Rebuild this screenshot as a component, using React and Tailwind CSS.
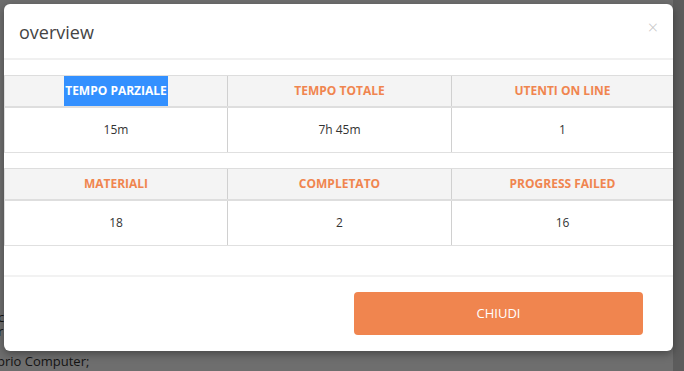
export default function App() {
  const font = { fontFamily: '"Open Sans", "Liberation Sans", sans-serif' };
  const Table = ({ cols }) => (
    <div className="border-t border-l border-[#dddddd]">
      <div className="grid grid-cols-[223px_224px_1fr] bg-[#f4f4f4] border-b-2 border-[#dedede]">
        {cols.map((c, i) => (
          <div
            key={i}
            className={`h-[30px] flex items-center justify-center text-[12px] font-bold ${i < 2 ? "border-r border-[#d0d0d0]" : ""}`}
          >
            {c.sel ? (
              <span className="bg-[#3390ff] text-white h-[30px] flex items-center px-[1px]">{c.h}</span>
            ) : (
              <span className="text-[#f0854f]">{c.h}</span>
            )}
          </div>
        ))}
      </div>
      <div className="grid grid-cols-[223px_224px_1fr] border-b border-[#e0e0e0]">
        {cols.map((c, i) => (
          <div
            key={i}
            className={`h-[44px] flex items-center justify-center text-[12px] text-[#333] ${i < 2 ? "border-r border-[#d0d0d0]" : ""}`}
          >
            {c.v}
          </div>
        ))}
      </div>
    </div>
  );
  return (
    <div className="relative w-[684px] h-[371px] overflow-hidden bg-[#6e6e6e]" style={font}>
      <div className="absolute left-0 top-[353px] text-[13px] text-[#141414] leading-[16px]">
        <div className="-ml-[3px]">prio Computer;</div>
      </div>
      <div className="absolute left-0 top-[310px] text-[13px] text-[#141414] leading-[14px] -ml-[2px]">
        <div>c</div>
        <div>r</div>
      </div>
      <div className="absolute right-0 top-0 w-[11px] h-full bg-[#5c5c5c]" />
      <div className="absolute left-[4px] top-[4px] w-[669px] h-[347px] bg-white rounded-[6px] shadow-[0_3px_9px_rgba(0,0,0,0.35)] flex flex-col">
        <div className="h-[56px] shrink-0 flex items-center justify-between pl-[15px] pr-[15px] border-b-2 border-[#f0f0f0]">
          <span className="text-[18px] text-[#444] pt-[3px]">overview</span>
          <span className="text-[18px] text-[#c4c4c4] leading-none -mt-[8px] font-light">×</span>
        </div>
        <div className="pt-[15px] pb-[29px] flex flex-col gap-[15px] border-b-2 border-[#f2f2f2]">
          <Table
            cols={[
              { h: "TEMPO PARZIALE", v: "15m", sel: true },
              { h: "TEMPO TOTALE", v: "7h 45m" },
              { h: "UTENTI ON LINE", v: "1" },
            ]}
          />
          <Table
            cols={[
              { h: "MATERIALI", v: "18" },
              { h: "COMPLETATO", v: "2" },
              { h: "PROGRESS FAILED", v: "16" },
            ]}
          />
        </div>
        <div className="flex justify-end pr-[30px] pt-[15px]">
          <button className="w-[289px] h-[43px] rounded-[4px] bg-[#f0854f] text-white text-[13px] flex items-center justify-center">
            CHIUDI
          </button>
        </div>
      </div>
    </div>
  );
}
